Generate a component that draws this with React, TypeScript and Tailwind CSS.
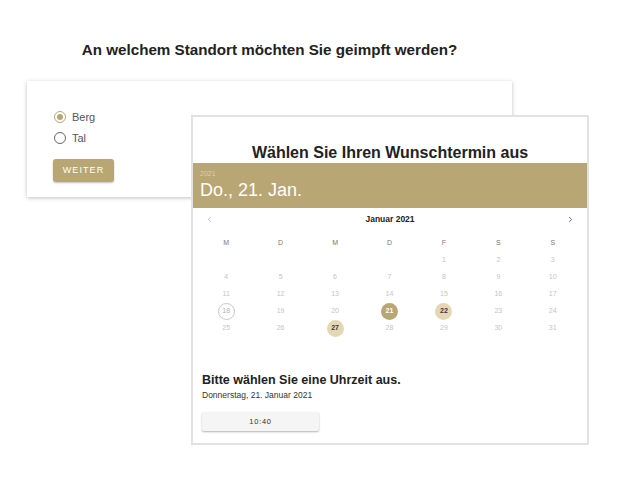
import { ChevronLeft, ChevronRight } from 'lucide-react'

const weekdays = ['M', 'D', 'M', 'D', 'F', 'S', 'S']

type Day = { n: number | null; kind?: 'today' | 'selected' | 'available' }

function buildDays(): Day[] {
  const days: Day[] = [null, null, null, null].map(() => ({ n: null }))
  for (let i = 1; i <= 31; i++) {
    let kind: Day['kind']
    if (i === 18) kind = 'today'
    if (i === 21) kind = 'selected'
    if (i === 22 || i === 27) kind = 'available'
    days.push({ n: i, kind })
  }
  return days
}

function DayCell({ day }: { day: Day }) {
  if (day.n === null) return <div className="h-[17px]" />
  const base = 'w-[17px] h-[17px] rounded-full flex items-center justify-center text-[7px]'
  let cls = 'text-[#c4c4c4]'
  if (day.kind === 'today') cls = 'border border-[#c8c8c8] text-[#b5b5b5]'
  if (day.kind === 'selected') cls = 'bg-[#b9a675] text-white font-bold'
  if (day.kind === 'available') cls = 'bg-[#e4d8b4] text-[#3a3a3a] font-bold'
  return (
    <div className="h-[17px] flex items-center justify-center">
      <div className={`${base} ${cls}`}>{day.n}</div>
    </div>
  )
}

export default function App() {
  const days = buildDays()
  return (
    <div className="relative w-[635px] h-[479px] bg-white overflow-hidden font-['Liberation_Sans',Arial,sans-serif]">
      <div className="w-[485px] ml-[27px]">
        <h1 className="pt-[39px] text-center text-[15.2px] font-bold text-[#222]">
          An welchem Standort möchten Sie geimpft werden?
        </h1>
        <div className="mt-[19px] h-[116px] bg-white shadow-[0_1px_4px_rgba(0,0,0,0.25)] pl-[27px] pt-[29px]">
          <label className="flex items-center gap-[6px] h-[14px]">
            <span className="w-[12px] h-[12px] rounded-full border-[1.5px] border-[#b9a675] flex items-center justify-center">
              <span className="w-[6px] h-[6px] rounded-full bg-[#b9a675]" />
            </span>
            <span className="text-[11px] text-[#555]">Berg</span>
          </label>
          <label className="flex items-center gap-[6px] h-[14px] mt-[7px]">
            <span className="w-[12px] h-[12px] rounded-full border-[1.5px] border-[#666]" />
            <span className="text-[11px] text-[#555]">Tal</span>
          </label>
          <button className="mt-[14px] w-[61px] h-[23px] rounded-[3px] bg-[#b9a675] text-white text-[9px] tracking-[0.12em] shadow-[0_1px_2px_rgba(0,0,0,0.25)] -ml-[1px]">
            WEITER
          </button>
        </div>
      </div>

      <div className="absolute left-[191px] top-[115px] w-[398px] h-[330px] bg-white border-2 border-[#e2e2e2] flex flex-col">
        <h2 className="pt-[26px] text-center text-[16px] font-bold text-[#222] leading-[20px]">
          Wählen Sie Ihren Wunschtermin aus
        </h2>
        <div className="h-[45px] bg-[#b9a675] pl-[7px] pt-[6px]">
          <div className="text-[7px] text-[#ddd0a8] leading-[10px]">2021</div>
          <div className="text-[18px] text-white leading-[22px]">Do., 21. Jan.</div>
        </div>
        <div className="flex items-center justify-between h-[23px] px-[12px]">
          <ChevronLeft size={9} className="text-[#aaa]" />
          <span className="text-[8.5px] font-bold text-[#222]">Januar 2021</span>
          <ChevronRight size={9} className="text-[#444]" />
        </div>
        <div className="grid grid-cols-7 pl-[6px] pr-[7px] mt-[4px]">
          {weekdays.map((w, i) => (
            <div key={i} className="h-[17px] flex items-center justify-center text-[7px] text-[#777]">
              {w}
            </div>
          ))}
          {days.map((d, i) => (
            <DayCell key={i} day={d} />
          ))}
        </div>
        <div className="pl-[9px] mt-[35px]">
          <div className="text-[12.5px] font-bold text-[#222] leading-[16px]">Bitte wählen Sie eine Uhrzeit aus.</div>
          <div className="text-[8.5px] text-[#333] mt-[1px]">Donnerstag, 21. Januar 2021</div>
          <button className="mt-[10px] w-[117px] h-[19px] bg-[#f5f5f5] rounded-[2px] shadow-[0_1px_2px_rgba(0,0,0,0.3)] text-[7.5px] tracking-[0.1em] text-[#333]">
            10:40
          </button>
        </div>
      </div>
    </div>
  )
}
